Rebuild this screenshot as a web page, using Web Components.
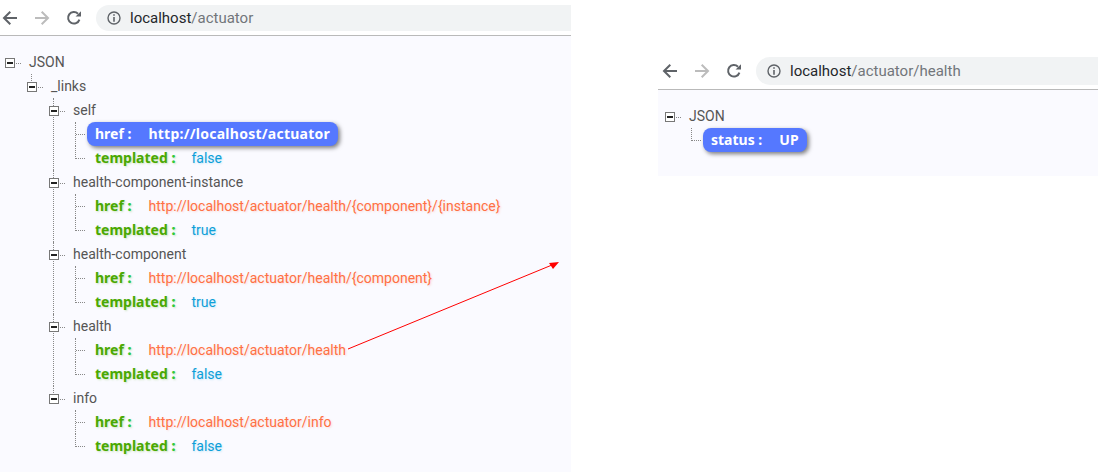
<!DOCTYPE html>
<html><head><meta charset="utf-8"><title>actuator</title>
<style>
html,body{margin:0;padding:0;background:#fff;}
body{width:1098px;height:472px;overflow:hidden;position:relative;font-family:Roboto,"Noto Sans CJK SC",sans-serif;}
</style></head><body>
<template id="t-win"><style>
:host{display:block;position:absolute;box-sizing:border-box;background:#fafaff;overflow:hidden;}
.bar{display:flex;align-items:center;background:#fff;height:35px;border-bottom:1px solid #b9b9b9;box-sizing:content-box;}
.nav{display:flex;align-items:center;flex:none;width:96px;height:100%;position:relative;}
.nav svg{position:absolute;top:50%;margin-top:-8px;}
.url{flex:1;display:flex;align-items:center;background:#f1f3f4;border-radius:14px 0 0 14px;height:26px;font:15px/26px Roboto,"Noto Sans CJK SC",sans-serif;color:#24272b;}
.url svg{margin-left:11px;margin-right:9px;flex:none}
.url span{color:#72767a}
.tree{padding:14px 0 0 5px;}
:host([kind=right]) .bar{height:36px}
:host([kind=right]) .url{height:28px}
:host([kind=right]) .tree{padding-left:7px}
:host([kind=right]) .nav{width:98px}
:host([kind=right]) .nav svg.b{left:4px}
:host([kind=right]) .nav svg.f{left:36px}
:host([kind=right]) .nav svg.r{left:68px}
.nav svg.b{left:2px}.nav svg.f{left:34px}.nav svg.r{left:66px}
</style>
<div class="bar">
<div class="nav">
<svg class="b" width="16" height="16" viewBox="0 0 16 16"><path d="M15 8H2.5M8.3 1.8 2 8l6.3 6.2" fill="none" stroke="#5f6368" stroke-width="2"/></svg>
<svg class="f" width="16" height="16" viewBox="0 0 16 16"><path d="M1 8h12.5M7.7 1.8 14 8l-6.3 6.2" fill="none" stroke="#bcbcbc" stroke-width="2"/></svg>
<svg class="r" width="16" height="16" viewBox="0 0 16 16"><path d="M13.4 9.6A5.8 5.8 0 1 1 12 3.7" fill="none" stroke="#5f6368" stroke-width="2"/><path d="M9.6 6.6H15V1.2z" fill="#5f6368"/></svg>
</div>
<div class="url"><svg width="14" height="14" viewBox="0 0 14 14"><circle cx="7" cy="7" r="6" fill="none" stroke="#5f6368" stroke-width="1.4"/><path d="M6.2 3.2h1.6v1.6H6.2zM6.2 6h1.6v4.8H6.2z" fill="#5f6368"/></svg><div><slot name="host"></slot><span><slot name="path"></slot></span></div></div>
</div>
<div class="tree"><slot></slot></div>
</template>

<template id="t-node"><style>
:host{display:block;position:relative;}
.row{display:flex;align-items:center;height:24px;position:relative;color:#555;font-size:14px;}
.box{box-sizing:border-box;width:10px;height:10px;margin-top:2px;border:1px solid #777;background:#fff;position:relative;flex:none;}
.box::after{content:"";position:absolute;left:1px;right:1px;top:3px;height:2px;background:#222;}
.dots{width:5px;margin:3px 8px 0 1px;border-top:1px dotted #888;flex:none;}
.kids{margin-left:22px;}
.v{position:absolute;left:4px;top:0;bottom:0;border-left:1px dotted #888;}
:host([root]) .v{display:none}
:host(:last-child) .v{bottom:auto;height:9px}
</style><i class="v"></i><div class="row"><i class="box"></i><i class="dots"></i><span><slot name="label"></slot></span></div><div class="kids"><slot></slot></div></template>

<template id="t-leaf"><style>
:host{display:block;position:relative;height:24px;}
.v{position:absolute;left:4px;top:0;bottom:0;border-left:1px dotted #888;}
:host(:last-child) .v{bottom:auto;height:13px}
.h{position:absolute;left:5px;top:12px;width:9px;border-top:1px dotted #888;}
.pill{position:absolute;left:16px;top:0;height:24px;padding:0 8px;display:flex;align-items:center;white-space:nowrap;font-size:14px;border-radius:8px;}
.k{margin-top:-2px;font-family:"Noto Sans","Noto Sans CJK SC",sans-serif;font-weight:700;color:#4aa802;text-shadow:1px 1px 2px rgba(74,168,2,.25);margin-right:17px;}
:host([type=bool]) .k{margin-right:16px}
.k b{color:#2fc83a}
.val{color:#ff7043;text-shadow:1px 1px 2px rgba(255,107,69,.2);}
:host([type=bool]) .val{color:#0e9fd8;text-shadow:1px 1px 2px rgba(14,159,216,.2);}
:host([active]) .pill{background:#5578ff;box-shadow:2px 2px 4px rgba(0,0,0,.5);}
:host([active]) .k,:host([active]) .k b,:host([active]) .val{color:#fff;font-weight:700;text-shadow:none}
:host([active]) .val{margin-top:-2px;font-family:"Noto Sans",sans-serif;letter-spacing:.25px}
</style><i class="v"></i><i class="h"></i><div class="pill"><span class="k"><slot name="key"></slot> <b>:</b></span><span class="val"><slot></slot></span></div></template>

<template id="t-arrow"><style>
:host{display:block;position:absolute;left:340px;top:255px;width:225px;height:100px;}
svg{display:block}
</style><svg width="225" height="100" viewBox="0 0 225 100"><path d="M8 94 212 10" stroke="#f00" stroke-width="1" fill="none"/><path d="M219 7 209 8 213 14z" fill="#f00"/></svg></template>

<browser-window kind="left" style="left:0;top:0;width:571px;height:472px">
<span slot="host">localhost</span><span slot="path">/actuator</span>
<tree-node root><span slot="label">JSON</span>
 <tree-node><span slot="label">_links</span>
  <tree-node><span slot="label">self</span>
   <tree-leaf active><span slot="key">href</span>http://localhost/actuator</tree-leaf>
   <tree-leaf type="bool"><span slot="key">templated</span>false</tree-leaf>
  </tree-node>
  <tree-node><span slot="label">health-component-instance</span>
   <tree-leaf><span slot="key">href</span>http://localhost/actuator/health/{component}/{instance}</tree-leaf>
   <tree-leaf type="bool"><span slot="key">templated</span>true</tree-leaf>
  </tree-node>
  <tree-node><span slot="label">health-component</span>
   <tree-leaf><span slot="key">href</span>http://localhost/actuator/health/{component}</tree-leaf>
   <tree-leaf type="bool"><span slot="key">templated</span>true</tree-leaf>
  </tree-node>
  <tree-node><span slot="label">health</span>
   <tree-leaf><span slot="key">href</span>http://localhost/actuator/health</tree-leaf>
   <tree-leaf type="bool"><span slot="key">templated</span>false</tree-leaf>
  </tree-node>
  <tree-node><span slot="label">info</span>
   <tree-leaf><span slot="key">href</span>http://localhost/actuator/info</tree-leaf>
   <tree-leaf type="bool"><span slot="key">templated</span>false</tree-leaf>
  </tree-node>
 </tree-node>
</tree-node>
</browser-window>

<browser-window kind="right" style="left:658px;top:53px;width:440px;height:123px">
<span slot="host">localhost</span><span slot="path">/actuator/health</span>
<tree-node root><span slot="label">JSON</span>
 <tree-leaf active><span slot="key">status</span>UP</tree-leaf>
</tree-node>
</browser-window>
<red-arrow></red-arrow>
<script>
function def(name,tpl){customElements.define(name,class extends HTMLElement{constructor(){super();this.attachShadow({mode:"open"}).appendChild(document.getElementById(tpl).content.cloneNode(true));}});}
def("browser-window","t-win");def("tree-node","t-node");def("tree-leaf","t-leaf");def("red-arrow","t-arrow");
</script>
</body></html>
